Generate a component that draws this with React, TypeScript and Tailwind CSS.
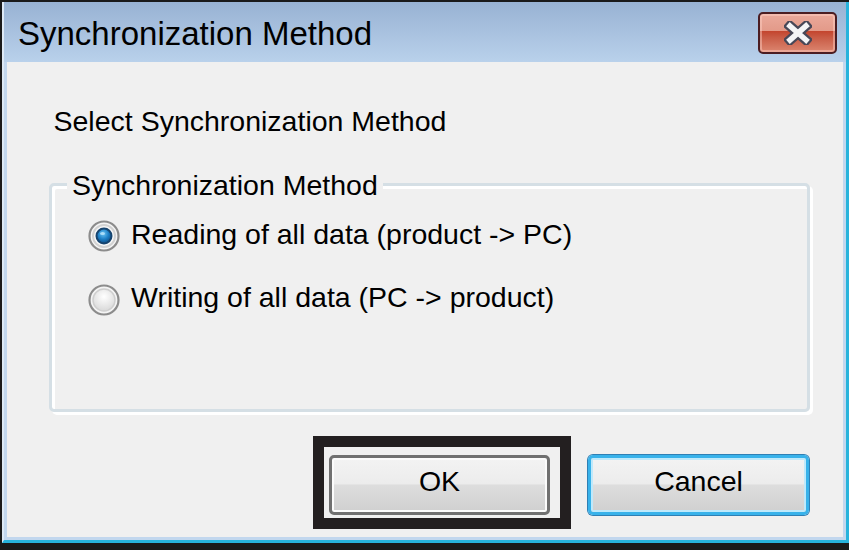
import React from 'react'

function Radio({ checked }: { checked: boolean }) {
  return (
    <svg width="32" height="32" viewBox="0 0 32 32" className="shrink-0">
      <defs>
        <radialGradient id="rbg" cx="50%" cy="35%" r="70%">
          <stop offset="0%" stopColor="#ffffff" />
          <stop offset="100%" stopColor="#d6d6d6" />
        </radialGradient>
        <radialGradient id="rdot" cx="45%" cy="35%" r="65%">
          <stop offset="0%" stopColor="#6ac4f4" />
          <stop offset="55%" stopColor="#1d7fc6" />
          <stop offset="100%" stopColor="#0d4d86" />
        </radialGradient>
      </defs>
      <circle cx="16" cy="16" r="14.5" fill="#f4f4f4" stroke="#8c8c8c" strokeWidth="2.2" />
      {checked ? (
        <>
          <circle cx="16" cy="16" r="11" fill="#f8f8f8" stroke="#d2d2d2" strokeWidth="2" />
          <circle cx="16" cy="16" r="7.5" fill="url(#rdot)" stroke="#17446e" strokeWidth="2" />
          <ellipse cx="14.5" cy="13.5" rx="2.5" ry="1.6" fill="#bfe6fb" opacity="0.8" />
        </>
      ) : (
        <circle cx="16" cy="16" r="11" fill="url(#rbg)" stroke="#cfcfcf" strokeWidth="1.5" />
      )}
    </svg>
  )
}

function CloseButton() {
  return (
    <div className="mt-[10px] mr-[9px] w-[79px] h-[42px] rounded-[5px] border-[2px] border-[#4b1d22] bg-[linear-gradient(to_bottom,#eaa99b_0%,#e39a89_44%,#c4462f_46%,#c95c46_62%,#dc8670_100%)] shadow-[inset_0_0_0_2px_rgba(255,210,200,0.45)] flex items-center justify-center">
      <svg width="28" height="24" viewBox="0 0 28 24">
        <path d="M6 5 L22 19 M22 5 L6 19" stroke="#474757" strokeWidth="10" strokeLinecap="square" />
        <path d="M6 5 L22 19 M22 5 L6 19" stroke="#f4f4f6" strokeWidth="5.5" strokeLinecap="square" />
      </svg>
    </div>
  )
}

const btn =
  'w-[221px] h-[60px] rounded-[5px] flex items-center justify-center pb-[8px] text-[28.5px] leading-[34px] text-black bg-[linear-gradient(to_bottom,#f3f3f3_0%,#ececec_48%,#dddddd_50%,#d0d0d0_100%)]'

export default function App() {
  return (
    <div className="w-[849px] h-[550px] bg-[#1a1a1a] pl-[2px] pt-[2px] pb-[7px] flex font-['Liberation_Sans',Arial,sans-serif] text-black">
      <div className="flex-1 flex flex-col border-l-[2px] border-r-[3px] border-b-[3px] border-l-[#dde9f5] border-r-[#27b3dc] border-b-[#27b3dc] bg-[#c2d7ee]">
        {/* Title bar */}
        <div className="h-[60px] flex justify-between items-start bg-[linear-gradient(to_bottom,#98b2d3,#b9d1eb)]">
          <span className="pt-[15px] pl-[14px] text-[33px] leading-[33px] text-black">Synchronization Method</span>
          <CloseButton />
        </div>

        {/* Client area */}
        <div className="flex-1 ml-[3px] mr-[3px] mb-[3px] bg-[#f0f0f0] flex flex-col">
          <p className="mt-[41.5px] ml-[46.5px] text-[28.5px] leading-[34px]">Select Synchronization Method</p>

          <fieldset className="mt-[30px] ml-[42px] w-[761px] h-[244px] pt-[15px] border-[3px] border-[#d5dfe5] rounded-[5px] shadow-[inset_3px_3px_0_#fff,3px_3px_0_#fff]">
            <legend className="ml-[15px] px-[5px] bg-[#f0f0f0] text-[28.5px] leading-[34px]">Synchronization Method</legend>
            <div className="flex items-start">
              <div className="ml-[36px] mt-[3.5px]">
                <Radio checked />
              </div>
              <span className="ml-[11px] text-[28.5px] leading-[34px]">Reading of all data (product -&gt; PC)</span>
            </div>
            <div className="flex items-start mt-[28px]">
              <div className="ml-[36px] mt-[3.5px]">
                <Radio checked={false} />
              </div>
              <span className="ml-[11px] text-[28.5px] leading-[34px]">Writing of all data (PC -&gt; product)</span>
            </div>
          </fieldset>

          <div className="mt-auto mb-[8.5px] pr-[34px] flex justify-end items-start gap-[17px]">
            <div className="border-[11px] border-[#231f20] pt-[8px] pb-[3px] pl-[5px] pr-[10px] bg-[#f0f0f0]">
              <div className={`${btn} border-[3px] border-[#707070] shadow-[inset_0_0_0_2px_#fbfbfb]`}>OK</div>
            </div>
            <div className={`${btn} mt-[19px] border-[3px] border-[#38b2ea] shadow-[inset_0_0_0_2px_#bfe9fb,0_0_0_1px_#2f7fb4]`}>Cancel</div>
          </div>
        </div>
      </div>
    </div>
  )
}
